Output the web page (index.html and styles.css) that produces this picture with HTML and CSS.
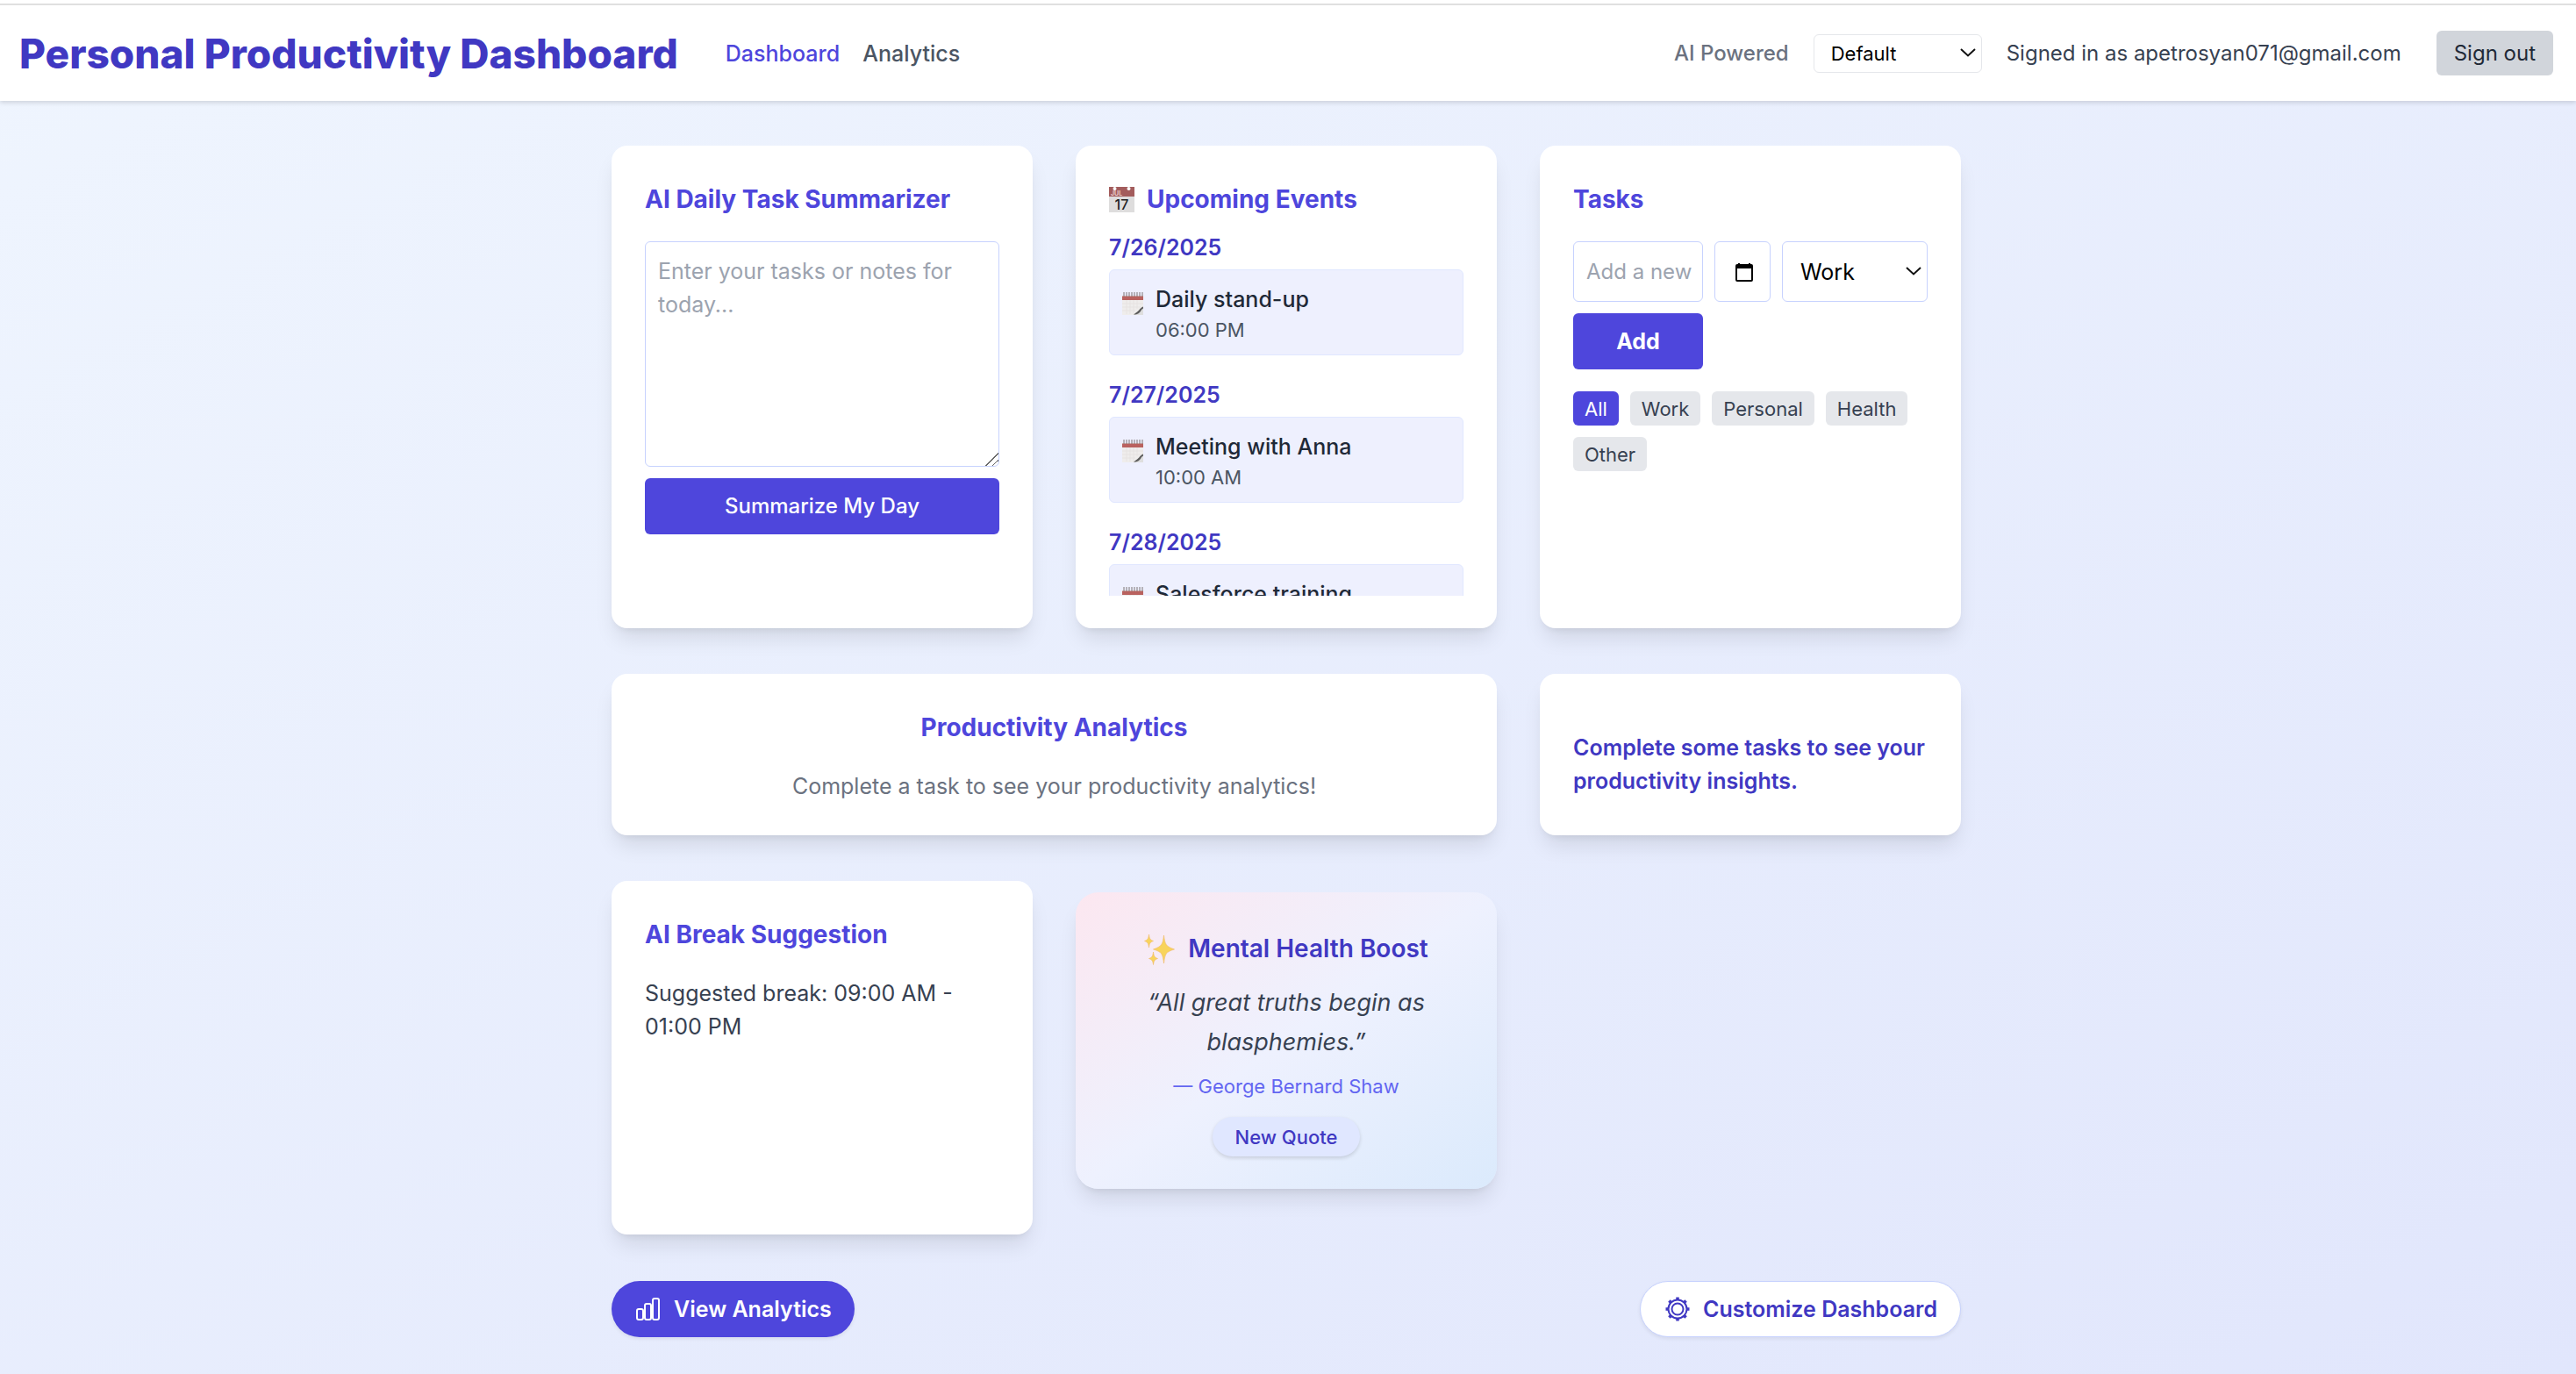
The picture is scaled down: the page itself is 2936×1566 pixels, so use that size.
FILE: index.html
```html
<!DOCTYPE html>
<html lang="en">
<head>
<meta charset="utf-8">
<meta name="viewport" content="width=device-width, initial-scale=1">
<title>Personal Productivity Dashboard</title>
<link rel="stylesheet" href="styles.css">
</head>
<body>
<svg class="sprite" aria-hidden="true">
  <symbol id="notepad" viewBox="0 0 24 26">
    <path d="M0 26V4h24v22z" fill="#efedec"/>
    <path d="M5 9v16M9 9v16M13 9v16M17 9v10M0 13h24M0 17h22M0 21h15" stroke="#e0dede" stroke-width="0.6"/>
    <path d="M0 4.500h24V9H0z" fill="#b9625f"/>
    <path d="M2 0v5M5 0v5M8 0v5M11 0v5M14 0v5M17 0v5M20 0v5M23 0v5" stroke="#7d7575" stroke-width="1"/>
    <path d="M24 17c-3 1-4 5-8 6l-3 3h11z" fill="#dedede"/>
    <path d="M24 16.500c-3.500 1-4.500 4.500-7 6l-4 3c5 0 7-2 8.500-4.500.8-1.500 1.500-1.800 2.500-2.500z" fill="#5c5c5c"/>
  </symbol>
  <symbol id="chevron" viewBox="0 0 18 10">
    <path d="M1 1l8 7.500L17 1" fill="none" stroke="#111" stroke-width="2"/>
  </symbol>
</svg>

<header class="topbar">
  <div class="topbar-group">
    <h1 class="brand">Personal Productivity Dashboard</h1>
    <nav class="nav">
      <a class="nav-link nav-link-active" href="#dashboard">Dashboard</a>
      <a class="nav-link" href="#analytics">Analytics</a>
    </nav>
  </div>
  <div class="topbar-group account">
    <label class="mode-label" for="mode">AI Powered</label>
    <div class="select-wrap mode-wrap">
      <select class="select mode-select" id="mode"><option>Default</option></select>
      <svg class="chevron" aria-hidden="true"><use href="#chevron"/></svg>
    </div>
    <span class="signed-in">Signed in as apetrosyan071@gmail.com</span>
    <button class="sign-out" type="button">Sign out</button>
  </div>
</header>

<main class="main">
  <div class="grid">
    <section class="card card-tall">
      <h2 class="card-title">AI Daily Task Summarizer</h2>
      <textarea class="notes" aria-label="Tasks or notes" placeholder="Enter your tasks or notes for today..."></textarea>
      <button class="btn btn-wide" type="button">Summarize My Day</button>
    </section>

    <section class="card card-tall events-card">
      <h2 class="card-title card-title-icon">
        <svg class="calendar-icon" viewBox="0 0 29 29" aria-hidden="true">
          <rect y="1" width="29" height="28" fill="#dedddd"/>
          <rect width="29" height="11" fill="#a35c5c"/>
          <circle cx="6.500" cy="2" r="2" fill="#fff"/>
          <circle cx="22.500" cy="2" r="2" fill="#fff"/>
          <text x="2" y="9.500" class="cal-month">JUL</text>
          <text x="14.500" y="25.500" text-anchor="middle" class="cal-day">17</text>
        </svg>
        Upcoming Events
      </h2>
      <div class="events">
        <div class="event-day">
          <h3 class="event-date">7/26/2025</h3>
          <div class="event"><svg class="event-icon" aria-hidden="true"><use href="#notepad"/></svg>
            <div><p class="event-name">Daily stand-up</p><p class="event-time">06:00 PM</p></div></div>
        </div>
        <div class="event-day">
          <h3 class="event-date">7/27/2025</h3>
          <div class="event"><svg class="event-icon" aria-hidden="true"><use href="#notepad"/></svg>
            <div><p class="event-name">Meeting with Anna</p><p class="event-time">10:00 AM</p></div></div>
        </div>
        <div class="event-day">
          <h3 class="event-date">7/28/2025</h3>
          <div class="event"><svg class="event-icon" aria-hidden="true"><use href="#notepad"/></svg>
            <div><p class="event-name">Salesforce training</p></div></div>
        </div>
      </div>
    </section>

    <section class="card card-tall">
      <h2 class="card-title">Tasks</h2>
      <form class="task-form">
        <input class="field" type="text" aria-label="New task" placeholder="Add a new task">
        <button class="date-button" type="button" aria-label="Due date">
          <svg class="date-icon" viewBox="0 0 20 22" aria-hidden="true">
            <path d="M4 1v3M16 1v3" stroke="#000" stroke-width="2"/>
            <rect x="1" y="3" width="18" height="18" rx="1" fill="none" stroke="#000" stroke-width="2"/>
            <path d="M1 3h18v4H1z" fill="#000"/>
          </svg>
        </button>
        <div class="select-wrap">
          <select class="select task-select" aria-label="Category"><option>Work</option></select>
          <svg class="chevron" aria-hidden="true"><use href="#chevron"/></svg>
        </div>
        <button class="btn btn-bold" type="button">Add</button>
      </form>
      <div class="chips">
        <button class="chip chip-active" type="button">All</button>
        <button class="chip" type="button">Work</button>
        <button class="chip" type="button">Personal</button>
        <button class="chip" type="button">Health</button>
        <button class="chip" type="button">Other</button>
      </div>
    </section>

    <section class="card card-wide">
      <h2 class="card-title">Productivity Analytics</h2>
      <p class="muted">Complete a task to see your productivity analytics!</p>
    </section>

    <section class="card">
      <p class="insight">Complete some tasks to see your productivity insights.</p>
    </section>

    <section class="card card-break">
      <h2 class="card-title">AI Break Suggestion</h2>
      <p>Suggested break: 09:00 AM - 01:00 PM</p>
    </section>

    <section class="card quote-card">
      <h2 class="quote-title">
        <svg class="sparkles" viewBox="0 0 36 36" aria-hidden="true">
          <g fill="#f8d45c" stroke="#f0b868" stroke-width="0.600">
            <path d="M22.500 2c1.400 11 2.500 12.500 12 16-9.500 3-10.600 4.500-12 16-1.400-11.500-2.500-13-12-16 9.500-3.500 10.600-5 12-16z"/>
            <path d="M5.500 1c.7 5 1.200 6 5 7.500-3.800 1.500-4.300 2.500-5 7.500-.7-5-1.200-6-5-7.500 3.800-1.500 4.300-2.500 5-7.500z"/>
            <path d="M10.500 21c.7 5 1.200 6 5 7.500-3.800 1.500-4.300 2.500-5 7-.7-4.500-1.200-5.500-5-7 3.800-1.500 4.300-2.500 5-7.500z"/>
          </g>
        </svg>
        Mental Health Boost
      </h2>
      <blockquote class="quote">“All great truths begin as blasphemies.”</blockquote>
      <p class="author">— George Bernard Shaw</p>
      <button class="new-quote" type="button">New Quote</button>
    </section>
  </div>

  <div class="actions">
    <button class="pill pill-primary" type="button">
      <svg class="pill-icon" viewBox="0 0 28 28" aria-hidden="true" fill="none" stroke="currentColor" stroke-width="2">
        <rect x="1" y="14" width="7" height="12" rx="2"/>
        <rect x="10" y="8" width="7" height="18" rx="2"/>
        <rect x="19" y="2" width="7" height="24" rx="2"/>
      </svg>
      View Analytics
    </button>
    <button class="pill pill-outline" type="button">
      <svg class="pill-icon" viewBox="0 0 28 28" aria-hidden="true" fill="none" stroke="currentColor" stroke-width="2">
        <circle cx="14" cy="14" r="10.500"/>
        <circle cx="14" cy="14" r="6.500"/>
        <path stroke-width="3.500" d="M14 .5v3M14 24.500v3M.5 14h3M24.500 14h3M4.400 4.400l2.200 2.200M21.400 21.400l2.200 2.200M4.400 23.600l2.200-2.200M21.400 6.600l2.200-2.200"/>
      </svg>
      Customize Dashboard
    </button>
  </div>
</main>
</body>
</html>
```

FILE: styles.css
```css
:root {
  --indigo: #4e46dc;
  --indigo-dark: #4038c2;
  --line: #c7d2fe;
  --text: #374151;
}

* { box-sizing: border-box; }

body {
  margin: 0;
  min-height: 100vh;
  background: linear-gradient(to bottom right, #eff5fe, #e1e6fc);
  color: var(--text);
  font-family: Inter, "Liberation Sans", sans-serif;
  font-size: 25px;
  line-height: 38px;
}

h1, h2, h3, p, blockquote { margin: 0; }
button, input, select, textarea { font: inherit; color: inherit; }
button { border: 0; cursor: pointer; }

.sprite { display: none; }

/* Top bar */
.topbar {
  display: flex;
  align-items: center;
  justify-content: space-between;
  margin-top: 4px;
  height: 111px;
  padding: 0 26px 0 22px;
  background: #fff;
  border-top: 2px solid #e0e0e0;
  box-shadow: 0 -4px 0 #fff, 0 2px 5px rgb(0 0 0 / 14%);
}
.topbar-group { display: flex; align-items: center; gap: 54px; }
.brand { font-size: 46px; line-height: 58px; font-weight: 800; color: var(--indigo-dark); }
.nav { display: flex; gap: 26px; }
.nav-link { color: #4b5563; font-weight: 500; text-decoration: none; }
.nav-link-active { color: var(--indigo); }
.account { gap: 28px; font-size: 24px; }
.mode-label { color: #6b7280; font-weight: 500; }
.signed-in { margin-right: 12px; }
.sign-out {
  height: 51px;
  padding: 0 20px;
  border-radius: 6px;
  background: #d1d5db;
  color: #1f2937;
}

/* Selects */
.select-wrap { position: relative; display: flex; }
.select {
  width: 100%;
  appearance: none;
  background: #fff;
  color: #000;
  border: 1px solid var(--line);
  border-radius: 6px;
}
.mode-wrap { width: 192px; }
.mode-select { height: 44px; padding: 0 19px; font-size: 22px; border-color: #e5e7eb; }
.task-select { height: 69px; padding: 0 20px; }
.chevron {
  position: absolute;
  right: 7px;
  top: 50%;
  width: 18px;
  height: 10px;
  margin-top: -6px;
  pointer-events: none;
}

/* Cards */
.main { max-width: 1542px; margin: 0 auto; padding: 51px 4px 42px 0; }
.grid { display: grid; grid-template-columns: repeat(3, minmax(0, 1fr)); gap: 52px 49px; }
.card {
  padding: 39px 38px 37px;
  background: #fff;
  border-radius: 18px;
  box-shadow: 0 16px 24px -5px rgb(0 0 0 / 10%), 0 6px 10px -6px rgb(0 0 0 / 10%);
}
.card-tall { height: 550px; }
.card-wide { grid-column: span 2; text-align: center; }
.card-break { min-height: 403px; }
.card-title {
  margin-bottom: 25px;
  color: var(--indigo);
  font-size: 28px;
  line-height: 45px;
  font-weight: 700;
}
.card-title-icon { display: flex; align-items: center; gap: 14px; margin-bottom: 13px; }
.muted { color: #6b7280; }
.insight { margin-top: 26px; color: var(--indigo-dark); font-weight: 600; }

.btn {
  height: 64px;
  border-radius: 6px;
  background: var(--indigo);
  color: #fff;
  font-weight: 500;
}
.btn-wide { width: 100%; font-size: 24px; }
.btn-bold { font-weight: 700; }

.notes {
  display: block;
  width: 100%;
  height: 257px;
  margin-bottom: 13px;
  padding: 14px;
  border: 1px solid var(--line);
  border-radius: 6px;
}
.notes::placeholder, .field::placeholder { color: #9ca3af; opacity: 1; }
.notes::-webkit-resizer {
  background: linear-gradient(135deg, transparent 48%, #666 48% 54%, transparent 54% 74%, #666 74% 80%, transparent 80%);
}

/* Events */
.events-card { display: flex; flex-direction: column; }
.calendar-icon { width: 29px; height: 29px; }
.cal-month { font-size: 7px; fill: #e6c9c9; }
.cal-day { font-size: 16px; font-weight: 500; fill: #222; }
.events { flex: 1; min-height: 0; overflow: hidden; }
.event-day { margin-bottom: 26px; }
.event-date { margin-bottom: 6px; color: var(--indigo-dark); font-size: 25px; line-height: 38px; font-weight: 600; }
.event {
  display: flex;
  gap: 14px;
  height: 98px;
  padding: 14px;
  background: #eef0fe;
  border: 1px solid #e0e7ff;
  border-radius: 6px;
}
.event-icon { width: 24px; height: 26px; margin-top: 11px; }
.event-name { color: #1f2937; font-weight: 500; }
.event-time { color: #4b5563; font-size: 22px; line-height: 32px; }

/* Tasks */
.task-form { display: grid; grid-template-columns: 148px 64px 1fr; gap: 13px; margin-bottom: 25px; }
.field {
  width: 100%;
  height: 69px;
  padding: 0 12px 0 14px;
  border: 1px solid var(--line);
  border-radius: 6px;
  font-size: 24px;
}
.date-button { display: grid; place-items: center; padding: 0 0 0 4px; background: #fff; border: 1px solid var(--line); border-radius: 6px; }
.date-icon { width: 20px; height: 22px; }
.chips { display: flex; flex-wrap: wrap; gap: 13px; }
.chip {
  height: 39px;
  padding: 0 13px;
  border-radius: 6px;
  background: #e5e7eb;
  color: var(--text);
  font-size: 22px;
  line-height: 32px;
}
.chip-active { background: var(--indigo); color: #fff; }

/* Quote */
.quote-card {
  align-self: start;
  display: flex;
  flex-direction: column;
  align-items: center;
  margin-top: 13px;
  border-radius: 26px;
  background: linear-gradient(to bottom right, #fce7f0, #eef1fe 50%, #dbeafc);
  text-align: center;
}
.quote-title {
  display: flex;
  align-items: center;
  gap: 14px;
  margin-bottom: 13px;
  color: var(--indigo-dark);
  font-size: 28px;
  line-height: 51px;
  font-weight: 600;
}
.sparkles { width: 36px; height: 36px; }
.quote { margin-bottom: 12px; font-size: 27px; line-height: 45px; font-style: italic; }
.author { margin-bottom: 19px; color: #6366f1; font-size: 22px; line-height: 32px; }
.new-quote {
  height: 45px;
  padding: 0 26px;
  border-radius: 23px;
  background: #e0e7ff;
  color: var(--indigo-dark);
  font-size: 22px;
  line-height: 32px;
  font-weight: 500;
  box-shadow: 0 2px 4px rgb(0 0 0 / 14%);
}

/* Page actions */
.actions { display: flex; justify-content: space-between; margin-top: 53px; }
.pill {
  display: flex;
  align-items: center;
  gap: 15px;
  height: 64px;
  padding: 0 26px 0 28px;
  border-radius: 32px;
  font-weight: 600;
  box-shadow: 0 2px 4px rgb(0 0 0 / 7%);
}
.pill-primary { background: var(--indigo); color: #fff; }
.pill-outline { background: #fff; color: var(--indigo-dark); border: 1px solid var(--line); }
.pill-icon { width: 28px; height: 28px; }
```
